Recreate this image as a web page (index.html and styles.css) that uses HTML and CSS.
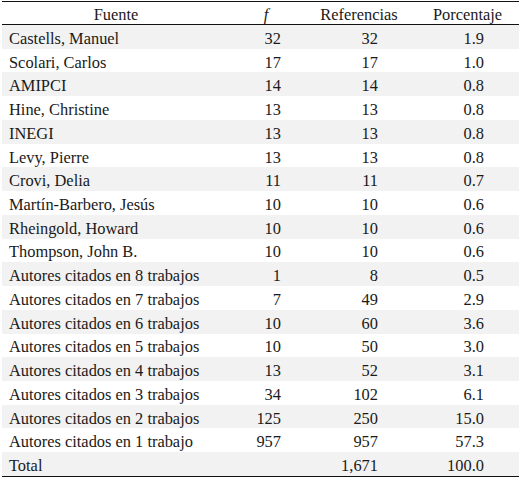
FILE: index.html
```html
<!DOCTYPE html>
<html lang="es">
<head>
<meta charset="utf-8">
<link rel="stylesheet" href="styles.css">
</head>
<body>
<table class="tbl">
  <colgroup>
    <col class="c1"><col class="c2"><col class="c3"><col class="c4">
  </colgroup>
  <thead>
    <tr><th>Fuente</th><th class="f">f</th><th>Referencias</th><th>Porcentaje</th></tr>
  </thead>
  <tbody>
    <tr><td>Castells, Manuel</td><td class="n2">32</td><td class="n3">32</td><td class="n4">1.9</td></tr>
    <tr><td>Scolari, Carlos</td><td class="n2">17</td><td class="n3">17</td><td class="n4">1.0</td></tr>
    <tr><td>AMIPCI</td><td class="n2">14</td><td class="n3">14</td><td class="n4">0.8</td></tr>
    <tr><td>Hine, Christine</td><td class="n2">13</td><td class="n3">13</td><td class="n4">0.8</td></tr>
    <tr><td>INEGI</td><td class="n2">13</td><td class="n3">13</td><td class="n4">0.8</td></tr>
    <tr><td>Levy, Pierre</td><td class="n2">13</td><td class="n3">13</td><td class="n4">0.8</td></tr>
    <tr><td>Crovi, Delia</td><td class="n2">11</td><td class="n3">11</td><td class="n4">0.7</td></tr>
    <tr><td>Martín-Barbero, Jesús</td><td class="n2">10</td><td class="n3">10</td><td class="n4">0.6</td></tr>
    <tr><td>Rheingold, Howard</td><td class="n2">10</td><td class="n3">10</td><td class="n4">0.6</td></tr>
    <tr><td>Thompson, John B.</td><td class="n2">10</td><td class="n3">10</td><td class="n4">0.6</td></tr>
    <tr><td>Autores citados en 8 trabajos</td><td class="n2">1</td><td class="n3">8</td><td class="n4">0.5</td></tr>
    <tr><td>Autores citados en 7 trabajos</td><td class="n2">7</td><td class="n3">49</td><td class="n4">2.9</td></tr>
    <tr><td>Autores citados en 6 trabajos</td><td class="n2">10</td><td class="n3">60</td><td class="n4">3.6</td></tr>
    <tr><td>Autores citados en 5 trabajos</td><td class="n2">10</td><td class="n3">50</td><td class="n4">3.0</td></tr>
    <tr><td>Autores citados en 4 trabajos</td><td class="n2">13</td><td class="n3">52</td><td class="n4">3.1</td></tr>
    <tr><td>Autores citados en 3 trabajos</td><td class="n2">34</td><td class="n3">102</td><td class="n4">6.1</td></tr>
    <tr><td>Autores citados en 2 trabajos</td><td class="n2">125</td><td class="n3">250</td><td class="n4">15.0</td></tr>
    <tr><td>Autores citados en 1 trabajo</td><td class="n2">957</td><td class="n3">957</td><td class="n4">57.3</td></tr>
    <tr><td>Total</td><td class="n2"></td><td class="n3">1,671</td><td class="n4">100.0</td></tr>
  </tbody>
</table>
</body>
</html>
```

FILE: styles.css
```css
html, body {
  margin: 0;
  padding: 0;
  background: #fff;
}
body {
  padding: 1px 2px 0 2px;
  font-family: "Liberation Serif", "Times New Roman", serif;
  font-size: 16.4px;
  color: #1a1a1a;
}
.tbl {
  width: 517px;
  border-collapse: collapse;
  table-layout: fixed;
  border-top: 1px solid #111;
  border-bottom: 1px solid #111;
}
.c1 { width: 228px; }
.c2 { width: 72px; }
.c3 { width: 114px; }
.c4 { width: 103px; }
.tbl th {
  font-weight: normal;
  text-align: center;
  height: 18px;
  padding: 4px 0 0 0;
  line-height: 18px;
  vertical-align: middle;
  border-bottom: 1px solid #111;
}
.tbl th.f {
  font-style: italic;
}
.tbl td {
  height: 19.74px;
  padding: 4px 0 0 7px;
  line-height: 18px;
  vertical-align: middle;
  white-space: nowrap;
}
.tbl tbody tr:nth-child(odd) td {
  background: #f2f2f2;
}
.tbl td.n2 { text-align: right; padding-right: 21px; padding-left: 0; }
.tbl td.n3 { text-align: right; padding-right: 38px; padding-left: 0; }
.tbl td.n4 { text-align: right; padding-right: 35px; padding-left: 0; }
```
